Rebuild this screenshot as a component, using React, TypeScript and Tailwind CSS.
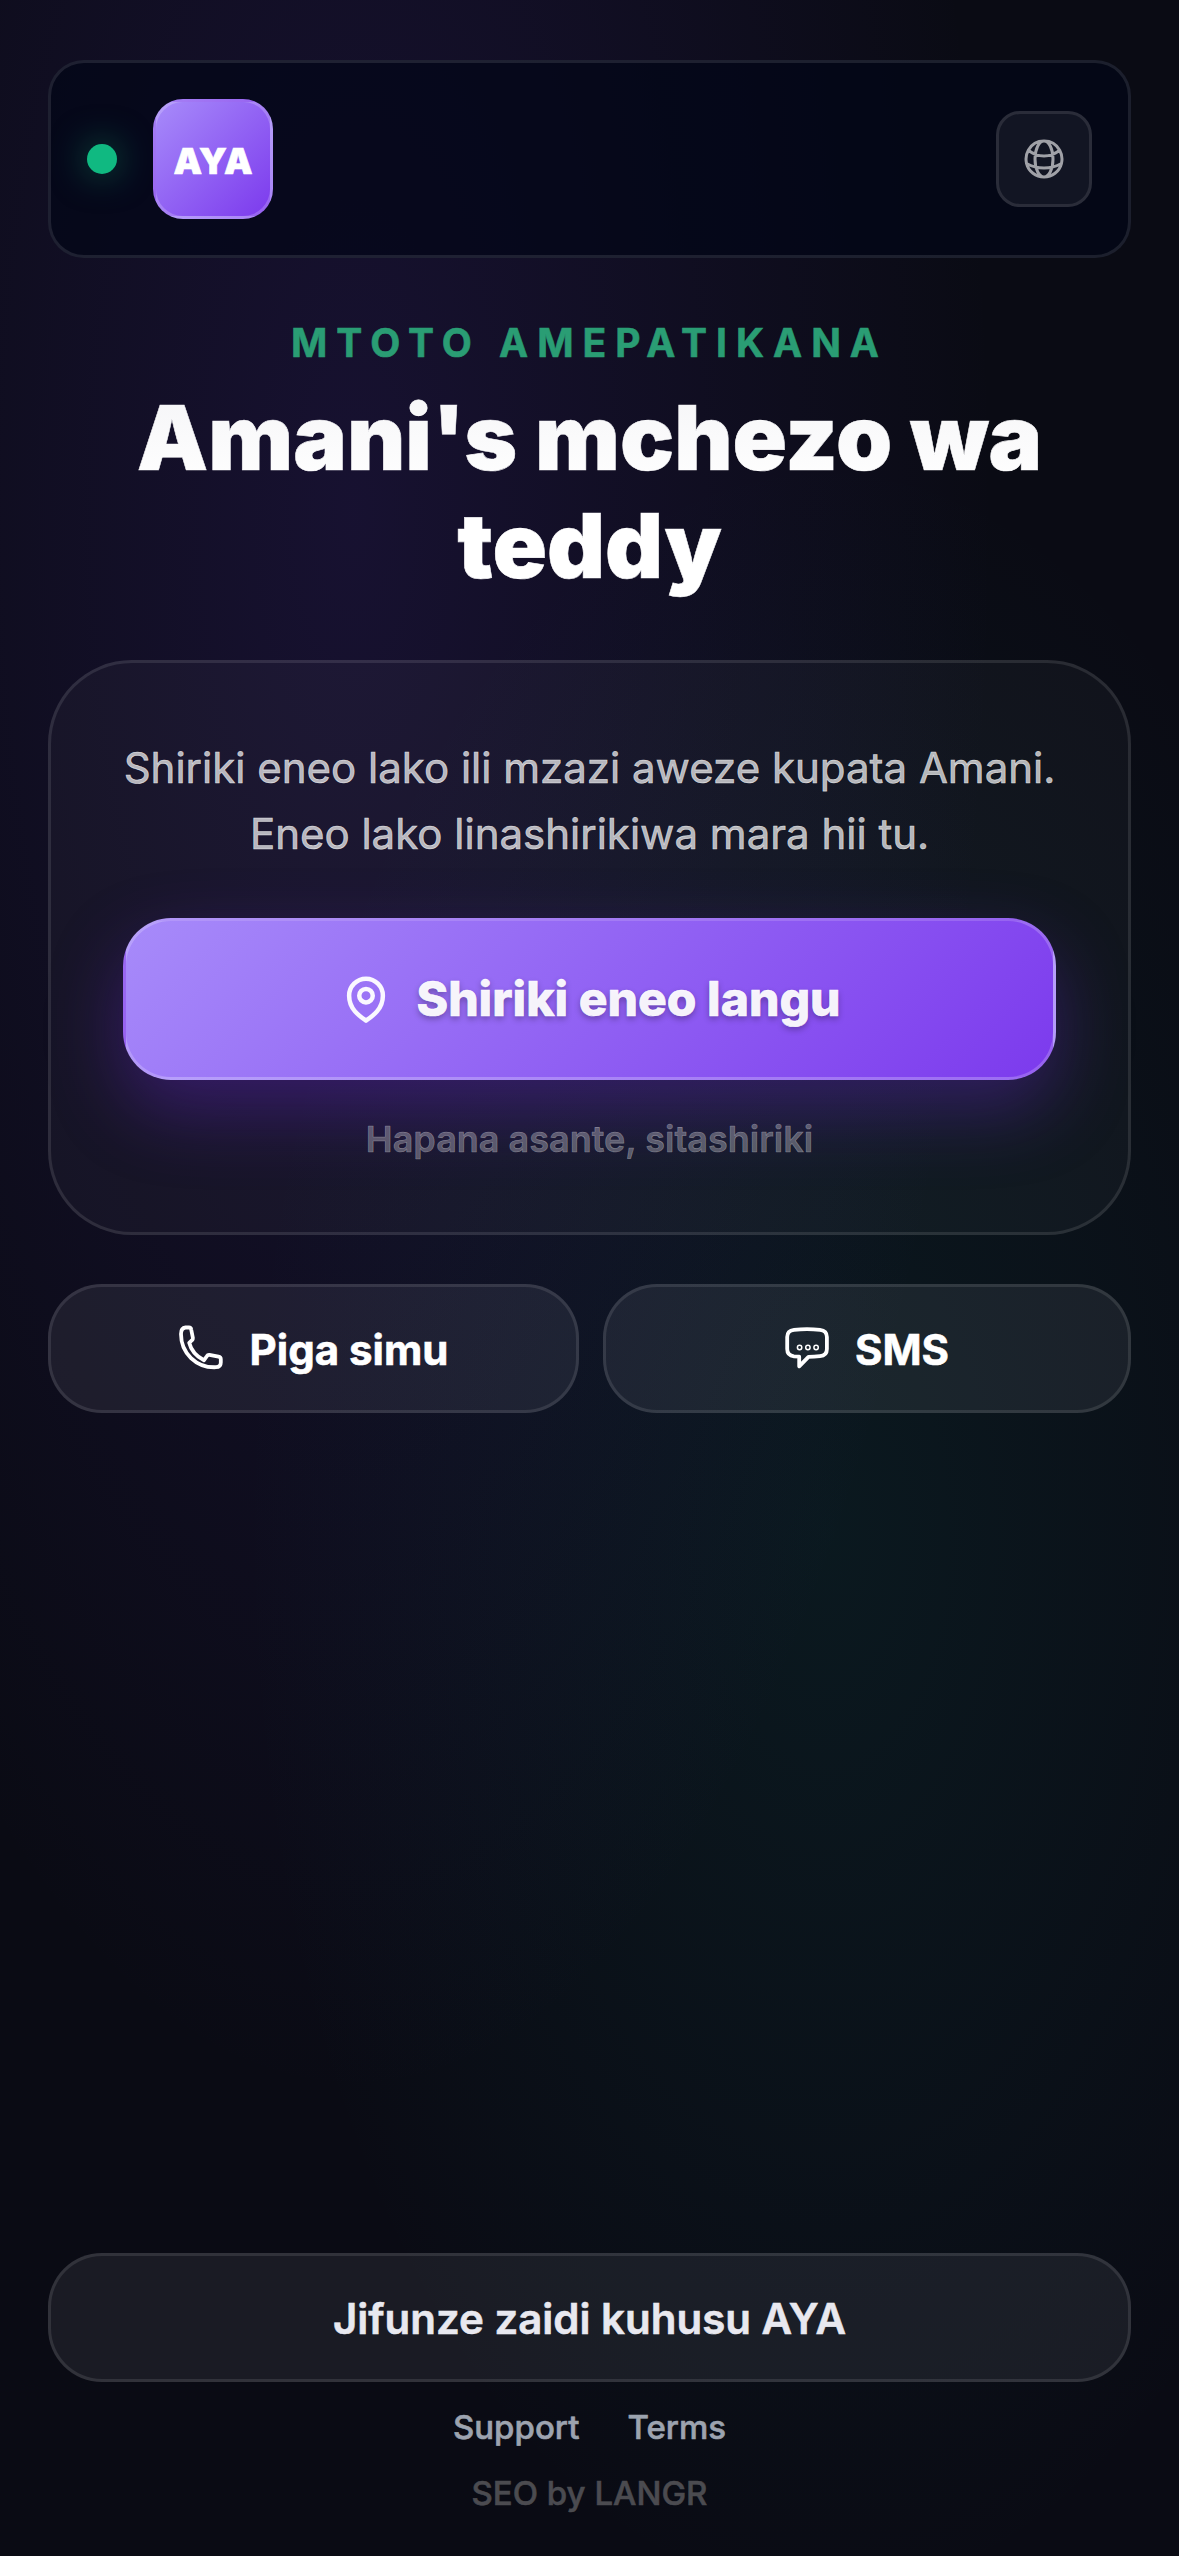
import React from "react";
import { HiOutlineGlobeAlt } from "react-icons/hi2";
import classNames from "clsx";

const PinIcon = () => (
  <svg
    className="ml-[1px] -mr-[1px]"
    width="54"
    height="54"
    viewBox="0 0 24 24"
    fill="none"
    stroke="currentColor"
    strokeWidth="2"
    strokeLinecap="round"
    strokeLinejoin="round"
  >
    <path d="M15 10.5a3 3 0 1 1-6 0 3 3 0 0 1 6 0Z" />
    <path d="M19.5 10.5c0 6-4.6 9.1-7.5 11.1C9.1 19.6 4.5 16.500 4.5 10.5a7.5 7.5 0 1 1 15 0Z" />
  </svg>
);

const PhoneIcon = () => (
  <svg
    className="-ml-[3px] mr-[2px]"
    width="48"
    height="48"
    viewBox="0 0 48 48"
    fill="none"
    stroke="currentColor"
    strokeWidth="3.8"
    strokeLinecap="round"
    strokeLinejoin="round"
  >
    <path d="M5 9C5 5 6.500 2.800 9.500 2.500H13C14.300 2.500 15 3.200 15.200 4.500L16.900 13C17 14 16.700 14.600 16 15.200L13.200 17.800C15 25 20.500 31.500 28 35.300L30.800 31.200C31.400 30.200 32.200 29.700 33.400 29.900L42.500 31.600C44 31.900 44.800 32.700 44.800 34.200V37.500C44.800 40.500 43 42.200 40 42.200C20 43 5 28 5 9Z" />
  </svg>
);

const ChatIcon = () => (
  <svg
    className="-ml-[2px]"
    width="48"
    height="48"
    viewBox="0 0 48 48"
    fill="none"
    stroke="currentColor"
    strokeWidth="3.8"
    strokeLinecap="round"
    strokeLinejoin="round"
  >
    <path d="M4.200 12C4.200 7.500 6.500 5.300 11 4.800C19 4 29 4 37 4.800C41.500 5.300 43.900 7.500 43.900 12V24C43.900 28.500 41.500 30.800 37 31.200C33 31.600 29 31.800 25.500 31.800L16.200 41.300V31.700L11 31.300C6.500 30.800 4.200 28.500 4.200 24Z" />
    <g strokeWidth="1.500">
      <circle cx="16.600" cy="22.500" r="2.200" />
      <circle cx="24.900" cy="22.500" r="2.200" />
      <circle cx="33.100" cy="22.500" r="2.200" />
    </g>
  </svg>
);

const SecondaryButton = ({
  className,
  icon,
  children,
}: {
  className?: string;
  icon?: React.ReactNode;
  children: React.ReactNode;
}) => (
  <button
    className={classNames(
      "flex h-[129px] items-center justify-center gap-6 rounded-[54px] border-3 border-white/10 bg-[#f0f4ff]/[0.07] text-[42px] leading-none",
      className
    )}
  >
    {icon}
    <span className="pt-[2px]">{children}</span>
  </button>
);

const Header = () => (
  <header className="flex h-[198px] items-center justify-between rounded-[36px] border-3 border-white/10 bg-[#020617]/70 px-9">
    <div className="flex items-center gap-9">
      <span className="size-[30px] rounded-full bg-[#10b981] shadow-[0_0_36px_rgba(16,185,129,0.5)]" />
      <div className="flex size-[120px] items-center justify-center rounded-[30px] border-3 border-white/20 bg-[linear-gradient(135deg,#a78bfa,#7c3aed)] pt-[3px] text-[36px] font-black">
        AYA
      </div>
    </div>
    <button className="flex size-24 items-center justify-center rounded-3xl border-3 border-white/10 bg-white/[0.06] text-white/60">
      <HiOutlineGlobeAlt size={48} />
    </button>
  </header>
);

const ShareCard = () => (
  <section className="mt-[60px] flex h-[575px] flex-col rounded-[84px] border-3 border-white/10 bg-white/[0.03] px-[72px] pt-[72px] text-center">
    <p className="text-[42px] leading-[66px] whitespace-nowrap text-white/70">
      Shiriki eneo lako ili mzazi aweze kupata Amani.
      <br />
      Eneo lako linashirikiwa mara hii tu.
    </p>
    <button className="mt-[51px] flex h-[162px] items-center justify-center gap-6 rounded-[48px] border-3 border-white/20 bg-[linear-gradient(135deg,#a78bfa,#7c3aed)] text-[48px] font-extrabold text-white/95 shadow-[0_30px_72px_rgba(109,40,217,0.35)]">
      <PinIcon />
      <span className="[text-shadow:0_3px_6px_rgba(0,0,0,0.3)]">
        Shiriki eneo langu
      </span>
    </button>
    <button className="mt-[37px] h-[44px] text-[36px] leading-[44px] font-semibold text-white/30">
      Hapana asante, sitashiriki
    </button>
  </section>
);

const Footer = () => (
  <footer className="mt-auto flex flex-col items-center">
    <SecondaryButton className="w-full font-semibold text-[#e8e8ef]">
      Jifunze zaidi kuhusu AYA
    </SecondaryButton>
    <nav className="mt-[25px] flex gap-12 text-[33px] leading-[40px] font-medium text-[#9ca3af]">
      <a>Support</a>
      <a>Terms</a>
    </nav>
    <p className="mt-[26px] text-[33px] leading-[40px] font-medium text-[#4b4b50]">
      SEO by LANGR
    </p>
  </footer>
);

export default function App() {
  return (
    <main className="flex h-[2556px] w-[1179px] flex-col bg-[#0a0b14] bg-[radial-gradient(ellipse_at_30%_20%,rgba(88,48,190,0.17),transparent_55%),radial-gradient(ellipse_at_70%_60%,rgba(16,165,145,0.09),transparent_50%)] px-12 pt-[60px] pb-[43px] font-['Inter',sans-serif] text-white [-webkit-text-stroke:0.6px]">
      <Header />
      <div className="mt-[61px] text-center">
        <p className="text-[39px] leading-[48px] font-bold tracking-[0.231em] text-[#2a9d74]">
          MTOTO AMEPATIKANA
        </p>
        <h1 className="mt-[17px] bg-linear-to-b from-[#f5f5f7] to-white to-50% bg-clip-text text-[90px] leading-[108px] font-black text-transparent">
          Amani's mchezo wa teddy
        </h1>
      </div>
      <ShareCard />
      <div className="mt-[49px] flex gap-6">
        <SecondaryButton className="w-[531px] font-bold" icon={<PhoneIcon />}>
          Piga simu
        </SecondaryButton>
        <SecondaryButton className="flex-1 font-bold" icon={<ChatIcon />}>
          SMS
        </SecondaryButton>
      </div>
      <Footer />
    </main>
  );
}
